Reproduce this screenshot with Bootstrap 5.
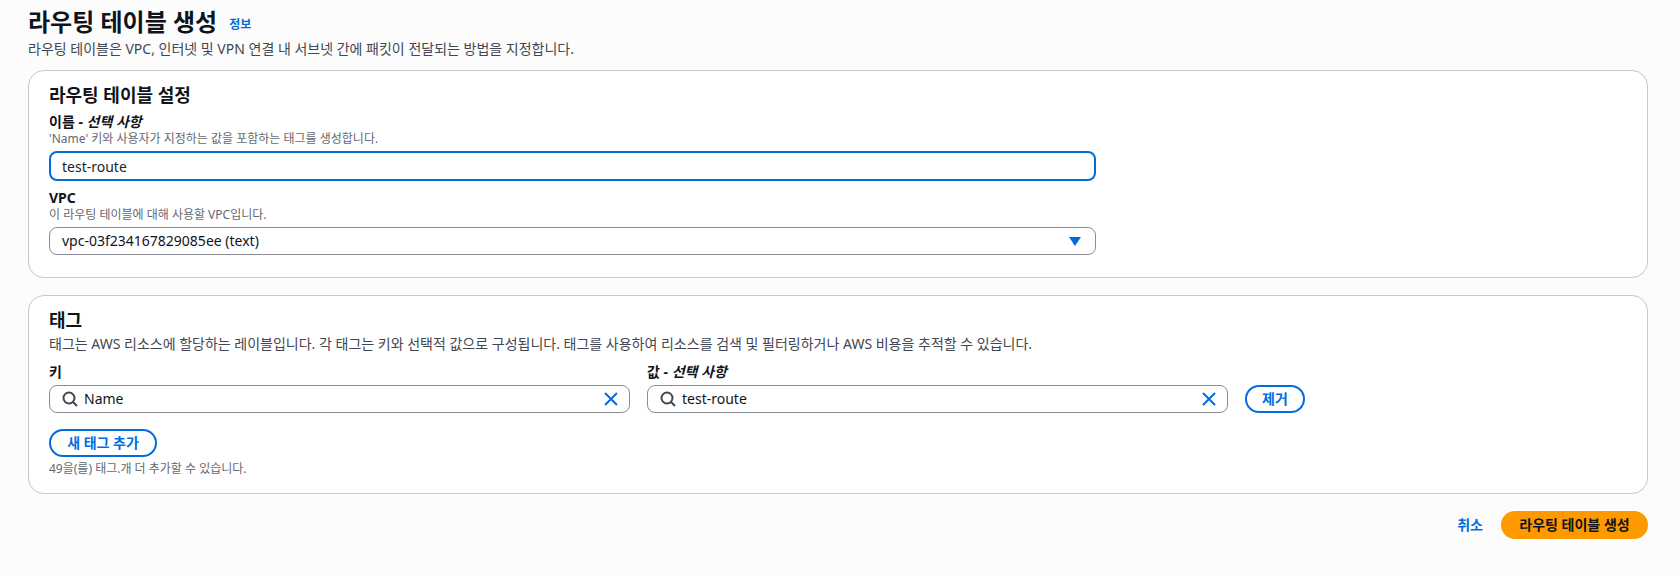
<!DOCTYPE html>
<html lang="ko">
<head>
<meta charset="utf-8">
<title>라우팅 테이블 생성</title>
<link href="https://cdn.jsdelivr.net/npm/bootstrap@5.3.0/dist/css/bootstrap.min.css" rel="stylesheet">
<style>
html,body{height:100%}
body{background:#fcfcfc;color:#0f141a;font-family:"Noto Sans","Noto Sans CJK KR",sans-serif;font-size:14px;line-height:20px}
.pg{padding:7px 32px 0 28px;width:1680px}
.pg-title{font-size:24px;line-height:30px;font-weight:700;margin:0;color:#0f141a}
.info-link{font-size:12px;line-height:16px;font-weight:700;color:#006ce0;text-decoration:none;margin-left:12px}
.pg-sub{color:#424650;margin:2px 0 11px;line-height:20px}
.pane{border:1px solid #c6c6cd;border-radius:16px;background:#fff;padding:0 20px;margin-bottom:17px}
.pane-a{height:208px;padding-top:10px}
.pane-b{height:199px;padding-top:10px}
.pane-title{font-size:18px;line-height:28px;font-weight:700;margin:0}
.fld-label{display:block;font-weight:700;line-height:18px;margin:0}
.fld-hint{display:block;font-size:12px;line-height:16px;color:#656871}
.box{height:28px;border:1px solid #8c8c94;border-radius:8px;background:#fff;color:#0f141a;font-size:14px;line-height:20px;padding:3px 12px;box-shadow:none}
.box:focus,.box-focus{border:2px solid #006ce0;box-shadow:none;outline:0;padding:2px 11px}
.box-wide{width:1047px}
.caret-ic{width:12px;height:9px;fill:#006ce0;flex:none;margin-right:2px}
.tag-grid{display:grid;grid-template-columns:581px 581px 60px;column-gap:17px;margin-top:9px}
.search-box{padding:3px 10px 3px 12px}
.search-ic{width:16px;height:16px;flex:none;margin-right:6px}
.clear-ic{width:16px;height:16px;flex:none}
.search-box input{border:0;outline:0;padding:0;background:none;color:#0f141a;font:inherit;min-width:0;flex:1}
.pill{border:2px solid #006ce0;border-radius:20px;background:#fff;color:#006ce0;font-size:14px;line-height:20px;font-weight:700;padding:2px 0;height:28px;--bs-btn-hover-bg:#fff}
.pill-add{width:108px;margin-top:16px}
.pill-rm{width:60px;align-self:end}
.main-btn{width:147px;height:28px;border:0;border-radius:20px;background:#ff9900;color:#0f141a;font-size:14px;line-height:20px;font-weight:700;padding:0}
.cancel-link{color:#006ce0;font-weight:700;text-decoration:none;margin-right:18px}
.foot{margin-top:0}
</style>
</head>
<body>
<div class="pg">
  <div class="d-flex align-items-end">
    <h1 class="pg-title">라우팅 테이블 생성</h1>
    <a class="info-link mb-1" href="#">정보</a>
  </div>
  <p class="pg-sub">라우팅 테이블은 VPC, 인터넷 및 VPN 연결 내 서브넷 간에 패킷이 전달되는 방법을 지정합니다.</p>

  <section class="pane pane-a">
    <h2 class="pane-title">라우팅 테이블 설정</h2>
    <label class="fld-label mt-1" for="rt-name">이름 - <em>선택 사항</em></label>
    <span class="fld-hint">'Name' 키와 사용자가 지정하는 값을 포함하는 태그를 생성합니다.</span>
    <input id="rt-name" class="form-control box box-focus box-wide mt-1" style="height:30px" value="test-route" autofocus>
    <label class="fld-label mt-2">VPC</label>
    <span class="fld-hint">이 라우팅 테이블에 대해 사용할 VPC입니다.</span>
    <div class="box box-wide d-flex align-items-center justify-content-between mt-1">
      <span>vpc-03f234167829085ee (text)</span>
      <svg class="caret-ic" viewBox="0 0 12 9"><path d="M0 0h12L6 9z"/></svg>
    </div>
  </section>

  <section class="pane pane-b">
    <h2 class="pane-title">태그</h2>
    <p class="m-0" style="color:#424650">태그는 AWS 리소스에 할당하는 레이블입니다. 각 태그는 키와 선택적 값으로 구성됩니다. 태그를 사용하여 리소스를 검색 및 필터링하거나 AWS 비용을 추적할 수 있습니다.</p>
    <div class="tag-grid">
      <div>
        <label class="fld-label mb-1">키</label>
        <div class="box search-box d-flex align-items-center">
          <svg class="search-ic" viewBox="0 0 16 16" fill="none" stroke="#424650" stroke-width="2"><circle cx="7" cy="7" r="5.5"/><path d="M11 11l4 4"/></svg>
          <input value="Name">
          <svg class="clear-ic" viewBox="0 0 16 16" fill="none" stroke="#006ce0" stroke-width="2"><path d="M2 2l12 12M14 2L2 14"/></svg>
        </div>
      </div>
      <div>
        <label class="fld-label mb-1">값 - <em>선택 사항</em></label>
        <div class="box search-box d-flex align-items-center">
          <svg class="search-ic" viewBox="0 0 16 16" fill="none" stroke="#424650" stroke-width="2"><circle cx="7" cy="7" r="5.5"/><path d="M11 11l4 4"/></svg>
          <input value="test-route">
          <svg class="clear-ic" viewBox="0 0 16 16" fill="none" stroke="#006ce0" stroke-width="2"><path d="M2 2l12 12M14 2L2 14"/></svg>
        </div>
      </div>
      <button class="btn pill pill-rm" type="button">제거</button>
    </div>
    <button class="btn pill pill-add d-block" type="button">새 태그 추가</button>
    <span class="fld-hint mt-1">49을(를) 태그.개 더 추가할 수 있습니다.</span>
  </section>

  <div class="foot d-flex justify-content-end align-items-center">
    <a class="cancel-link" href="#">취소</a>
    <button class="btn main-btn" type="button">라우팅 테이블 생성</button>
  </div>
</div>
</body>
</html>
